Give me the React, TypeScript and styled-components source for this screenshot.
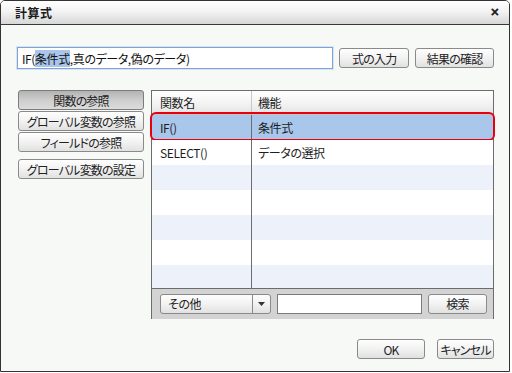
import React from "react";
import styled, { createGlobalStyle, css } from "styled-components";

const Global = createGlobalStyle`
  html, body { margin: 0; padding: 0; background: #ffffff; }
  body {
    font-family: "Noto Sans CJK JP", "Noto Sans", sans-serif;
    font-size: 12px;
    color: #1e1e1e;
    font-feature-settings: "palt";
    letter-spacing: -0.4px;
  }
  * { box-sizing: border-box; }
`;

const Dialog = styled.div`
  width: 510px;
  height: 372px;
  border: 1px solid #333;
  border-radius: 5px 5px 0 0;
  background: #f7f9f6;
  display: flex;
  flex-direction: column;
  overflow: hidden;
`;

const TitleBar = styled.div`
  height: 24px;
  flex: none;
  display: flex;
  align-items: center;
  justify-content: space-between;
  padding: 0 10px 1px 14px;
  background: linear-gradient(#ffffff, #f3f3f3 45%, #d7d7d7);
  border-bottom: 1px solid #3a3a3a;
`;

const Title = styled.span`
  font-size: 12px;
  font-weight: 700;
  color: #1a1a1a;
  letter-spacing: 0.5px;
`;

const Close = styled.span`
  font-family: "DejaVu Sans", sans-serif;
  font-weight: 700;
  font-size: 11px;
  color: #1a1a1a;
  line-height: 1;
  -webkit-text-stroke: 0.6px #1a1a1a;
`;

const Body = styled.div`
  flex: 1;
  display: flex;
  flex-direction: column;
  padding: 22px 15px 0 16px;
`;

const FormulaRow = styled.div`
  display: flex;
  align-items: flex-start;
  gap: 6px;
`;

const FormulaInput = styled.div`
  width: 317px;
  height: 22px;
  border: 1px solid #7fa3d2;
  box-shadow: 0 0 0 1px #d6e4f5;
  background: #fff;
  display: flex;
  align-items: center;
  padding-left: 4px;
  white-space: nowrap;
  font-size: 12px;
  color: #111;
`;

const Sel = styled.span`
  background: #a9c5ea;
`;

const Button = styled.div<{ $w: number; $pressed?: boolean }>`
  width: ${(p) => p.$w}px;
  height: 20px;
  border: 1px solid #8a8a8a;
  border-radius: 3px;
  display: flex;
  align-items: center;
  justify-content: center;
  font-size: 12px;
  letter-spacing: -0.8px;
  color: #222;
  white-space: nowrap;
  background: linear-gradient(#fefefe, #f2f2f2 50%, #e1e1e1);
  ${(p) =>
    p.$pressed &&
    css`
      background: linear-gradient(#b3b3b3, #cdcdcd 50%, #dcdcdc);
      border-color: #7c7c7c;
    `}
`;

const TopButton = styled(Button)`
  margin-top: 1px;
`;

const MainRow = styled.div`
  display: flex;
  margin-top: 21px;
  gap: 7px;
`;

const LeftCol = styled.div`
  display: flex;
  flex-direction: column;
  gap: 1px;
  margin-left: 1px;
`;

const SetButton = styled(Button)`
  margin-top: 6px;
`;

const Table = styled.div`
  width: 343px;
  border: 1px solid #6c6c6c;
  border-bottom: none;
  display: flex;
  flex-direction: column;
`;

const HeaderRow = styled.div`
  display: grid;
  grid-template-columns: 100px 1fr;
  height: 24px;
  background: linear-gradient(#ffffff, #f4f4f4 50%, #e4e4e4);
  border-bottom: 1px solid #c4c4c4;
`;

const Cell = styled.div<{ $first?: boolean }>`
  display: flex;
  align-items: center;
  padding-left: ${(p) => (p.$first ? 8 : 6)}px;
  white-space: nowrap;
  ${(p) => p.$first && css`border-right: 1px solid #6c6c6c;`}
`;

const HeaderCell = styled(Cell)<{ $first?: boolean }>`
  ${(p) => p.$first && css`border-right: 1px solid #c8c8c8;`}
`;

const Row = styled.div<{ $bg: string; $h: number }>`
  position: relative;
  display: grid;
  grid-template-columns: 100px 1fr;
  height: ${(p) => p.$h}px;
  background: ${(p) => p.$bg};
`;

const Highlight = styled.div`
  position: absolute;
  top: -3px;
  bottom: -1px;
  left: -2px;
  right: -2px;
  border: 2px solid #e8000c;
  border-radius: 6px;
  pointer-events: none;
`;

const SearchBar = styled.div`
  height: 31px;
  border-top: 1px solid #6c6c6c;
  background: #d3d3d3;
  display: flex;
  align-items: center;
  padding: 0 0 1px 8px;
  gap: 6px;
`;

const Select = styled.div`
  width: 111px;
  height: 20px;
  border: 1px solid #8a8a8a;
  border-radius: 3px;
  background: linear-gradient(#fefefe, #f2f2f2 50%, #e1e1e1);
  display: flex;
`;

const SelectText = styled.div`
  flex: 1;
  display: flex;
  align-items: center;
  padding-left: 7px;
  border-right: 1px solid #8a8a8a;
`;

const SelectArrow = styled.div`
  width: 17px;
  display: flex;
  align-items: center;
  justify-content: center;
`;

const SearchInput = styled.div`
  width: 145px;
  height: 20px;
  border: 1px solid #7a7a7a;
  background: #fff;
`;

const Footer = styled.div`
  display: flex;
  justify-content: flex-end;
  gap: 12px;
  margin-top: 20px;
`;

const rows = [
  { name: "IF()", fn: "条件式", selected: true },
  { name: "SELECT()", fn: "データの選択" },
  { name: "", fn: "" },
  { name: "", fn: "" },
  { name: "", fn: "" },
  { name: "", fn: "" },
  { name: "", fn: "" },
];

export default function App() {
  return (
    <>
      <Global />
      <Dialog>
        <TitleBar>
          <Title>計算式</Title>
          <Close>✕</Close>
        </TitleBar>
        <Body>
          <FormulaRow>
            <FormulaInput>
              IF(<Sel>条件式</Sel>,真のデータ,偽のデータ)
            </FormulaInput>
            <TopButton $w={70}>式の入力</TopButton>
            <TopButton $w={79}>結果の確認</TopButton>
          </FormulaRow>
          <MainRow>
            <LeftCol>
              <Button $w={126} $pressed>関数の参照</Button>
              <Button $w={126}>グローバル変数の参照</Button>
              <Button $w={126}>フィールドの参照</Button>
              <SetButton $w={126}>グローバル変数の設定</SetButton>
            </LeftCol>
            <Table>
              <HeaderRow>
                <HeaderCell $first>関数名</HeaderCell>
                <HeaderCell>機能</HeaderCell>
              </HeaderRow>
              {rows.map((r, i) => (
                <Row
                  key={i}
                  $h={i === rows.length - 1 ? 23 : 25}
                  $bg={r.selected ? "#a9c6eb" : i % 2 === 0 ? "#edf2fa" : "#ffffff"}
                >
                  <Cell $first>{r.name}</Cell>
                  <Cell>{r.fn}</Cell>
                  {r.selected && <Highlight />}
                </Row>
              ))}
              <SearchBar>
                <Select>
                  <SelectText>その他</SelectText>
                  <SelectArrow>
                    <svg width="7" height="4" viewBox="0 0 7 4">
                      <path d="M0 0 H7 L3.5 4 Z" fill="#333" />
                    </svg>
                  </SelectArrow>
                </Select>
                <SearchInput />
                <Button $w={59}>検索</Button>
              </SearchBar>
            </Table>
          </MainRow>
          <Footer>
            <Button $w={68}>OK</Button>
            <Button $w={57}>キャンセル</Button>
          </Footer>
        </Body>
      </Dialog>
    </>
  );
}
